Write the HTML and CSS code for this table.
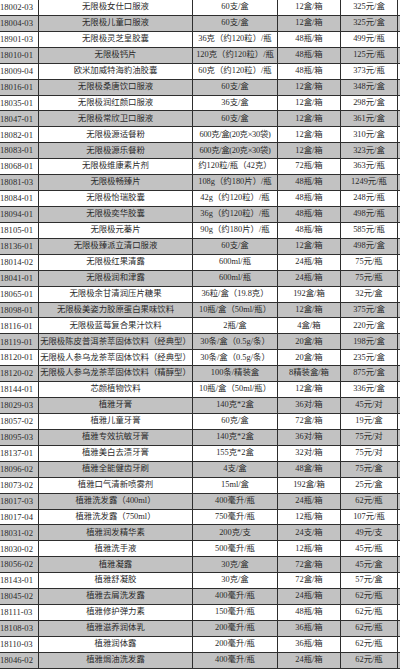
FILE: index.html
```html
<!DOCTYPE html>
<html lang="zh">
<head>
<meta charset="utf-8">
<link rel="stylesheet" href="styles.css">
</head>
<body>
<div class="sheet">
  <div class="row"><span class="code">18002-03</span><span>无限极女仕口服液</span><span>60支/盒</span><span>12盒/箱</span><span>325元/盒</span><span></span></div>
  <div class="row alt"><span class="code">18004-03</span><span>无限极儿童口服液</span><span>60支/盒</span><span>12盒/箱</span><span>325元/盒</span><span></span></div>
  <div class="row"><span class="code">18901-03</span><span>无限极灵芝皇胶囊</span><span>36克（约120粒）/瓶</span><span>48瓶/箱</span><span>499元/瓶</span><span></span></div>
  <div class="row alt"><span class="code">18010-01</span><span>无限极钙片</span><span>120克（约120粒）/瓶</span><span>48瓶/箱</span><span>125元/瓶</span><span></span></div>
  <div class="row"><span class="code">18009-04</span><span>欧米加威特海豹油胶囊</span><span>60克（约120粒）/瓶</span><span>48瓶/箱</span><span>373元/瓶</span><span></span></div>
  <div class="row alt"><span class="code">18016-01</span><span>无限极桑唐饮口服液</span><span>60支/盒</span><span>12盒/箱</span><span>348元/盒</span><span></span></div>
  <div class="row"><span class="code">18035-01</span><span>无限极润红颜口服液</span><span>36支/盒</span><span>12盒/箱</span><span>298元/盒</span><span></span></div>
  <div class="row alt"><span class="code">18047-01</span><span>无限极常欣卫口服液</span><span>60支/盒</span><span>12盒/箱</span><span>361元/盒</span><span></span></div>
  <div class="row"><span class="code">18082-01</span><span>无限极源适餐粉</span><span class="tight">600克/盒(20克×30袋)</span><span>12盒/箱</span><span>310元/盒</span><span></span></div>
  <div class="row alt"><span class="code">18083-01</span><span>无限极源乐餐粉</span><span class="tight">600克/盒(20克×30袋)</span><span>12盒/箱</span><span>323元/盒</span><span></span></div>
  <div class="row"><span class="code">18068-01</span><span>无限极维康素片剂</span><span>约120粒/瓶（42克）</span><span>72瓶/箱</span><span>363元/瓶</span><span></span></div>
  <div class="row alt"><span class="code">18081-03</span><span>无限极畅臻片</span><span>108g（约180片）/瓶</span><span>48瓶/箱</span><span>1249元/瓶</span><span></span></div>
  <div class="row"><span class="code">18084-01</span><span>无限极怡瑞胶囊</span><span>42g（约120粒）/瓶</span><span>48瓶/箱</span><span>248元/瓶</span><span></span></div>
  <div class="row alt"><span class="code">18094-01</span><span>无限极奕华胶囊</span><span>36g（约120粒）/瓶</span><span>48瓶/箱</span><span>498元/瓶</span><span></span></div>
  <div class="row"><span class="code">18105-01</span><span>无限极元蓁片</span><span>90g（约180片）/瓶</span><span>48瓶/箱</span><span>585元/瓶</span><span></span></div>
  <div class="row alt"><span class="code">18136-01</span><span>无限极臻派立清口服液</span><span>60支/盒</span><span>12盒/箱</span><span>498元/盒</span><span></span></div>
  <div class="row"><span class="code">18014-02</span><span>无限极红果清露</span><span>600ml/瓶</span><span>24瓶/箱</span><span>75元/瓶</span><span></span></div>
  <div class="row alt"><span class="code">18041-01</span><span>无限极润和津露</span><span>600ml/瓶</span><span>24瓶/箱</span><span>75元/瓶</span><span></span></div>
  <div class="row"><span class="code">18065-01</span><span>无限极余甘清润压片糖果</span><span>36粒/盒（19.8克）</span><span>192盒/箱</span><span>32元/盒</span><span></span></div>
  <div class="row alt"><span class="code">18098-01</span><span>无限极美姿力胶原蛋白果味饮料</span><span>10瓶/盒（50ml/瓶）</span><span>12盒/箱</span><span>375元/盒</span><span></span></div>
  <div class="row"><span class="code">18116-01</span><span>无限极蓝莓复合果汁饮料</span><span>2瓶/盒</span><span>4盒/箱</span><span>220元/盒</span><span></span></div>
  <div class="row alt"><span class="code">18119-01</span><span>无限极陈皮普洱茶萃固体饮料（经典型）</span><span>30条/盒（0.5g/条）</span><span>20盒/箱</span><span>198元/盒</span><span></span></div>
  <div class="row"><span class="code">18120-01</span><span>无限极人参乌龙茶萃固体饮料（经典型）</span><span>30条/盒（0.5g/条）</span><span>20盒/箱</span><span>235元/盒</span><span></span></div>
  <div class="row alt"><span class="code">18120-02</span><span>无限极人参乌龙茶萃固体饮料（精醇型）</span><span>100条/精装盒</span><span>8精装盒/箱</span><span>875元/盒</span><span></span></div>
  <div class="row"><span class="code">18144-01</span><span>芯颜植物饮料</span><span>10瓶/盒（50ml/瓶）</span><span>12盒/箱</span><span>336元/盒</span><span></span></div>
  <div class="row alt"><span class="code">18029-03</span><span>植雅牙膏</span><span>140克*2盒</span><span>36对/箱</span><span>45元/对</span><span></span></div>
  <div class="row"><span class="code">18057-02</span><span>植雅儿童牙膏</span><span>60克/盒</span><span>72盒/箱</span><span>19元/盒</span><span></span></div>
  <div class="row alt"><span class="code">18095-03</span><span>植雅专效抗敏牙膏</span><span>140克*2盒</span><span>36对/箱</span><span>75元/对</span><span></span></div>
  <div class="row"><span class="code">18137-01</span><span>植雅美白去渍牙膏</span><span>155克*2盒</span><span>32对/箱</span><span>75元/对</span><span></span></div>
  <div class="row alt"><span class="code">18096-02</span><span>植雅全能健齿牙刷</span><span>4支/盒</span><span>48盒/箱</span><span>75元/盒</span><span></span></div>
  <div class="row"><span class="code">18073-02</span><span>植雅口气清新喷雾剂</span><span>15ml/盒</span><span>192盒/箱</span><span>25元/盒</span><span></span></div>
  <div class="row alt"><span class="code">18017-03</span><span>植雅洗发露（400ml）</span><span>400毫升/瓶</span><span>24瓶/箱</span><span>62元/瓶</span><span></span></div>
  <div class="row"><span class="code">18017-04</span><span>植雅洗发露（750ml）</span><span>750毫升/瓶</span><span>12瓶/箱</span><span>107元/瓶</span><span></span></div>
  <div class="row alt"><span class="code">18031-02</span><span>植雅润发精华素</span><span>200克/支</span><span>24支/箱</span><span>49元/支</span><span></span></div>
  <div class="row"><span class="code">18030-02</span><span>植雅洗手液</span><span>500毫升/瓶</span><span>12瓶/箱</span><span>45元/瓶</span><span></span></div>
  <div class="row alt"><span class="code">18056-02</span><span>植雅凝露</span><span>30克/盒</span><span>72盒/箱</span><span>45元/盒</span><span></span></div>
  <div class="row"><span class="code">18143-01</span><span>植雅舒凝胶</span><span>30克/盒</span><span>72盒/箱</span><span>57元/盒</span><span></span></div>
  <div class="row alt"><span class="code">18045-02</span><span>植雅去屑洗发露</span><span>400毫升/瓶</span><span>24瓶/箱</span><span>62元/瓶</span><span></span></div>
  <div class="row"><span class="code">18111-03</span><span>植雅修护弹力素</span><span>150毫升/瓶</span><span>48瓶/箱</span><span>62元/瓶</span><span></span></div>
  <div class="row alt"><span class="code">18108-03</span><span>植雅滋养润体乳</span><span>200毫升/瓶</span><span>36瓶/箱</span><span>62元/瓶</span><span></span></div>
  <div class="row"><span class="code">18110-03</span><span>植雅润体露</span><span>200毫升/瓶</span><span>36瓶/箱</span><span>62元/瓶</span><span></span></div>
  <div class="row alt"><span class="code">18046-02</span><span>植雅焗油洗发露</span><span>400毫升/瓶</span><span>24瓶/箱</span><span>62元/瓶</span><span></span></div>
</div>
</body>
</html>
```
FILE: styles.css
```css
html, body {
  margin: 0;
  padding: 0;
  background: #ffffff;
}

.sheet {
  width: 400px;
  overflow: hidden;
  font-family: "Liberation Serif", "Noto Sans CJK SC", serif;
  font-size: 8.4px;
  color: #2a2a2a;
}

.row {
  display: grid;
  grid-template-columns: 39px 154px 85px 63px 57px 1fr;
  height: 15.93px;
  box-sizing: border-box;
  border-bottom: 1px solid #2e2e2e;
  background: #ffffff;
}

.row.alt {
  background: #c2c2c2;
}

.row span {
  display: flex;
  align-items: center;
  justify-content: center;
  border-right: 1px solid #2e2e2e;
  white-space: nowrap;
  overflow: hidden;
  line-height: 1;
}

.row span:last-child {
  border-right: none;
}

.row .code {
  justify-content: flex-start;
  padding-left: 0;
  font-size: 8.6px;
}

.row .tight {
  letter-spacing: -0.3px;
}
```
